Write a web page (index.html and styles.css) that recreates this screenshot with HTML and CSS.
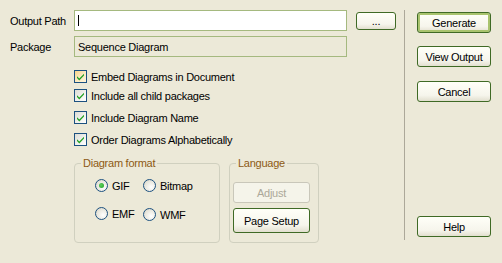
FILE: index.html
```html
<!DOCTYPE html>
<html lang="en">
<head>
  <meta charset="UTF-8" />
  <title>Generate Documentation</title>
  <link rel="stylesheet" href="styles.css">
</head>
<body>
  <div class="dialog">
    <div class="main">
      <div class="field-row">
        <label class="field-label">Output Path</label>
        <div class="text-box"><span class="caret"></span></div>
        <button class="btn btn-browse">...</button>
      </div>
      <div class="field-row field-row-second">
        <label class="field-label">Package</label>
        <div class="text-box readonly">Sequence Diagram</div>
      </div>

      <ul class="options">
        <li class="check-item"><span class="checkbox hot"><svg viewBox="0 0 11 11"><path d="M2 5.2 L4.3 7.6 L9 2.8 L9 4.6 L4.3 9.4 L2 7 Z"/></svg></span>Embed Diagrams in Document</li>
        <li class="check-item item-tight"><span class="checkbox"><svg viewBox="0 0 11 11"><path d="M2 5.2 L4.3 7.6 L9 2.8 L9 4.6 L4.3 9.4 L2 7 Z"/></svg></span>Include all child packages</li>
        <li class="check-item"><span class="checkbox"><svg viewBox="0 0 11 11"><path d="M2 5.2 L4.3 7.6 L9 2.8 L9 4.6 L4.3 9.4 L2 7 Z"/></svg></span>Include Diagram Name</li>
        <li class="check-item"><span class="checkbox"><svg viewBox="0 0 11 11"><path d="M2 5.2 L4.3 7.6 L9 2.8 L9 4.6 L4.3 9.4 L2 7 Z"/></svg></span>Order Diagrams Alphabetically</li>
      </ul>

      <div class="groups">
        <fieldset class="group group-format">
          <legend>Diagram format</legend>
          <div class="radio-grid">
            <label class="radio-item"><span class="radio checked"></span>GIF</label>
            <label class="radio-item"><span class="radio"></span>Bitmap</label>
            <label class="radio-item"><span class="radio"></span>EMF</label>
            <label class="radio-item radio-low"><span class="radio"></span>WMF</label>
          </div>
        </fieldset>
        <fieldset class="group group-language">
          <legend>Language</legend>
          <button class="btn btn-group" disabled>Adjust</button>
          <button class="btn btn-group btn-tall">Page Setup</button>
        </fieldset>
      </div>
    </div>

    <div class="separator"></div>

    <div class="side">
      <button class="btn btn-side btn-default">Generate</button>
      <button class="btn btn-side btn-view">View Output</button>
      <button class="btn btn-side btn-cancel">Cancel</button>
      <button class="btn btn-side btn-help">Help</button>
    </div>
  </div>
</body>
</html>
```

FILE: styles.css
```css
body {
  margin: 0;
  background: #ece9d8;
  font-family: 'Liberation Sans', Arial, sans-serif;
  font-size: 11px;
  letter-spacing: -0.25px;
  color: #000;
}

.dialog {
  display: flex;
  width: 502px;
  height: 263px;
}

.main {
  width: 394px;
  padding: 10px 0 0 10px;
}

.field-row {
  display: flex;
  align-items: center;
  height: 21px;
}

.field-row-second {
  margin-top: 5px;
}

.field-label {
  width: 64px;
}

.text-box {
  box-sizing: border-box;
  width: 273px;
  height: 21px;
  border: 1px solid #a5b97f;
  background: #fff;
  padding-left: 3px;
  display: flex;
  align-items: center;
}

.text-box.readonly {
  background: #ece9d8;
}

.caret {
  display: block;
  width: 1px;
  height: 11px;
  background: #000;
}

.btn {
  box-sizing: border-box;
  font-family: 'Liberation Sans', Arial, sans-serif;
  font-size: 11px;
  letter-spacing: -0.25px;
  color: #000;
  border: 1px solid #3f6a25;
  border-radius: 3px;
  background: linear-gradient(#fffff8, #f6f5ec 70%, #e2dfcf);
  padding: 0;
  cursor: pointer;
}

.btn:disabled {
  color: #aca899;
  border-color: #c9c7ba;
  background: #f5f4ea;
  cursor: default;
}

.btn-browse {
  width: 40px;
  height: 18px;
  margin-left: 9px;
}

.options {
  list-style: none;
  margin: 13px 0 0 64px;
  padding: 0;
  display: flex;
  flex-direction: column;
  gap: 9px;
}

.check-item {
  display: flex;
  align-items: center;
  height: 13px;
}

.item-tight {
  margin-top: -3px;
}

.checkbox {
  box-sizing: border-box;
  width: 13px;
  height: 13px;
  margin-right: 4px;
  border: 1px solid #1c5180;
  background: linear-gradient(135deg, #dcdcd5, #f6f6f3 70%, #fff);
  display: flex;
  align-items: center;
  justify-content: center;
}

.checkbox.hot {
  background: linear-gradient(135deg, #f8d48a, #fbe9bf 50%, #fff5dc);
}

.checkbox svg {
  width: 11px;
  height: 11px;
  fill: #21a121;
}

.groups {
  display: flex;
  margin: 11px 0 0 64px;
}

.group {
  box-sizing: border-box;
  margin: 0;
  padding: 0;
  height: 86px;
  border: 1px solid #d0d0bf;
  border-radius: 4px;
  min-width: 0;
}

.group legend {
  margin-left: 6px;
  padding: 0 2px;
  line-height: 13px;
  color: #8c5a14;
}

.group-format {
  width: 146px;
}

.group-language {
  width: 90px;
  margin-left: 9px;
  display: flex;
  flex-direction: column;
}

.radio-grid {
  display: grid;
  grid-template-columns: 48px auto;
  row-gap: 15px;
  margin: 9px 0 0 20px;
}

.radio-item {
  display: flex;
  align-items: center;
  height: 13px;
}

.radio-low {
  margin-top: 1px;
}

.radio {
  box-sizing: border-box;
  width: 13px;
  height: 13px;
  margin-right: 4px;
  border: 1px solid #1c5180;
  border-radius: 50%;
  background: radial-gradient(circle at 65% 65%, #ffffff, #e8e6dc 60%, #cfcbbd);
  display: flex;
  align-items: center;
  justify-content: center;
}

.radio.checked::after {
  content: "";
  width: 5px;
  height: 5px;
  border-radius: 50%;
  background: radial-gradient(circle at 40% 40%, #5fd05f, #21a121);
}

.btn-group {
  width: 77px;
  height: 21px;
  margin: 12px 0 0 3px;
}

.btn-tall {
  height: 25px;
  margin-top: 5px;
}

.separator {
  width: 1px;
  background: #aca899;
  margin: 10px 0 23px;
}

.side {
  display: flex;
  flex-direction: column;
  margin-left: 12px;
  padding: 12px 0 26px;
}

.btn-side {
  width: 74px;
  height: 21px;
}

.btn-default {
  box-shadow: inset 0 0 0 2px #a9c36e;
}

.btn-view {
  margin-top: 13px;
}

.btn-cancel {
  margin-top: 14px;
}

.btn-help {
  margin-top: auto;
}
```
